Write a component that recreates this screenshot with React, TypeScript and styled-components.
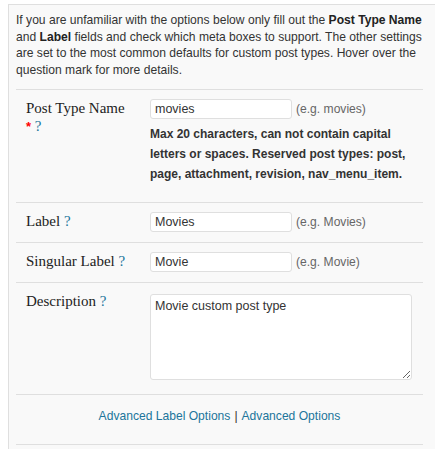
import React from "react";
import styled, { createGlobalStyle } from "styled-components";

const Global = createGlobalStyle`
  html, body { margin: 0; padding: 0; background: #ffffff; }
  body { font-family: "Liberation Sans", Arial, sans-serif; font-size: 12px; color: #333; }
`;

const Page = styled.div`
  padding: 4px 0 0 8px;
`;

const Panel = styled.div`
  background: #f9f9f9;
  border-top: 1px solid #dfdfdf;
  border-left: 1px solid #dfdfdf;
  padding: 0 12px 5px 7px;
`;

const Intro = styled.p`
  margin: 0;
  padding: 7px 0 11px;
  font-size: 12.1px;
  line-height: 16.5px;
  color: #333;
  b { font-weight: bold; color: #222; }
`;

const Row = styled.div`
  display: grid;
  grid-template-columns: 134px 1fr;
  border-top: 1px solid #dfdfdf;
  padding: 9px 0 10px;
`;

const Label = styled.div`
  padding-left: 10px;
  font-family: "Liberation Serif", "Times New Roman", serif;
  font-size: 15px;
  line-height: 18px;
  color: #222;
`;

const Req = styled.span`
  color: #ff0000;
  font-family: "Liberation Sans", Arial, sans-serif;
  font-weight: bold;
  font-size: 13px;
`;

const Help = styled.span`
  color: #21759b;
`;

const Field = styled.div`
  display: flex;
  flex-direction: column;
`;

const InputLine = styled.div`
  display: flex;
  align-items: center;
  gap: 4px;
`;

const TextInput = styled.input`
  box-sizing: border-box;
  width: 142px;
  height: 20px;
  border: 1px solid #dfdfdf;
  border-radius: 3px;
  background: #fff;
  padding: 0 4px;
  margin: 0;
  font-family: "Liberation Sans", Arial, sans-serif;
  font-size: 12.5px;
  color: #333;
  outline: none;
`;

const Example = styled.span`
  color: #666;
  font-size: 12.1px;
`;

const Note = styled.p`
  margin: 5px 0 8px;
  font-size: 12px;
  font-weight: bold;
  line-height: 20px;
  color: #333;
  width: 262px;
`;

const TextArea = styled.textarea`
  box-sizing: border-box;
  width: 262px;
  height: 86px;
  border: 1px solid #dfdfdf;
  border-radius: 3px;
  background: #fff;
  padding: 4px 4px;
  margin: 2px 0 4px;
  font-family: "Liberation Sans", Arial, sans-serif;
  font-size: 12.5px;
  color: #333;
  outline: none;
  display: block;
`;

const Links = styled.div`
  box-sizing: border-box;
  border-top: 1px solid #dfdfdf;
  border-bottom: 1px solid #dfdfdf;
  height: 51px;
  padding-top: 14px;
  display: flex;
  align-items: flex-start;
  justify-content: center;
  gap: 4px;
  font-size: 12.1px;
  line-height: 15px;
  color: #333;
  a { color: #21759b; text-decoration: none; }
`;

export default function App() {
  return (
    <>
      <Global />
      <Page>
        <Panel>
          <Intro>
            If you are unfamiliar with the options below only fill out the <b>Post Type Name</b> and{" "}
            <b>Label</b> fields and check which meta boxes to support. The other settings are set to
            the most common defaults for custom post types. Hover over the question mark for more
            details.
          </Intro>
          <Row>
            <Label>
              Post Type Name
              <br />
              <Req>*</Req> <Help>?</Help>
            </Label>
            <Field>
              <InputLine>
                <TextInput defaultValue="movies" />
                <Example>(e.g. movies)</Example>
              </InputLine>
              <Note>
                Max 20 characters, can not contain capital letters or spaces. Reserved post types:
                post, page, attachment, revision, nav_menu_item.
              </Note>
            </Field>
          </Row>
          <Row>
            <Label>
              Label <Help>?</Help>
            </Label>
            <InputLine>
              <TextInput defaultValue="Movies" />
              <Example>(e.g. Movies)</Example>
            </InputLine>
          </Row>
          <Row>
            <Label>
              Singular Label <Help>?</Help>
            </Label>
            <InputLine>
              <TextInput defaultValue="Movie" />
              <Example>(e.g. Movie)</Example>
            </InputLine>
          </Row>
          <Row>
            <Label>
              Description <Help>?</Help>
            </Label>
            <Field>
              <TextArea defaultValue="Movie custom post type" />
            </Field>
          </Row>
          <Links>
            <a href="#">Advanced Label Options</a>
            <span>|</span>
            <a href="#">Advanced Options</a>
          </Links>
        </Panel>
      </Page>
    </>
  );
}
